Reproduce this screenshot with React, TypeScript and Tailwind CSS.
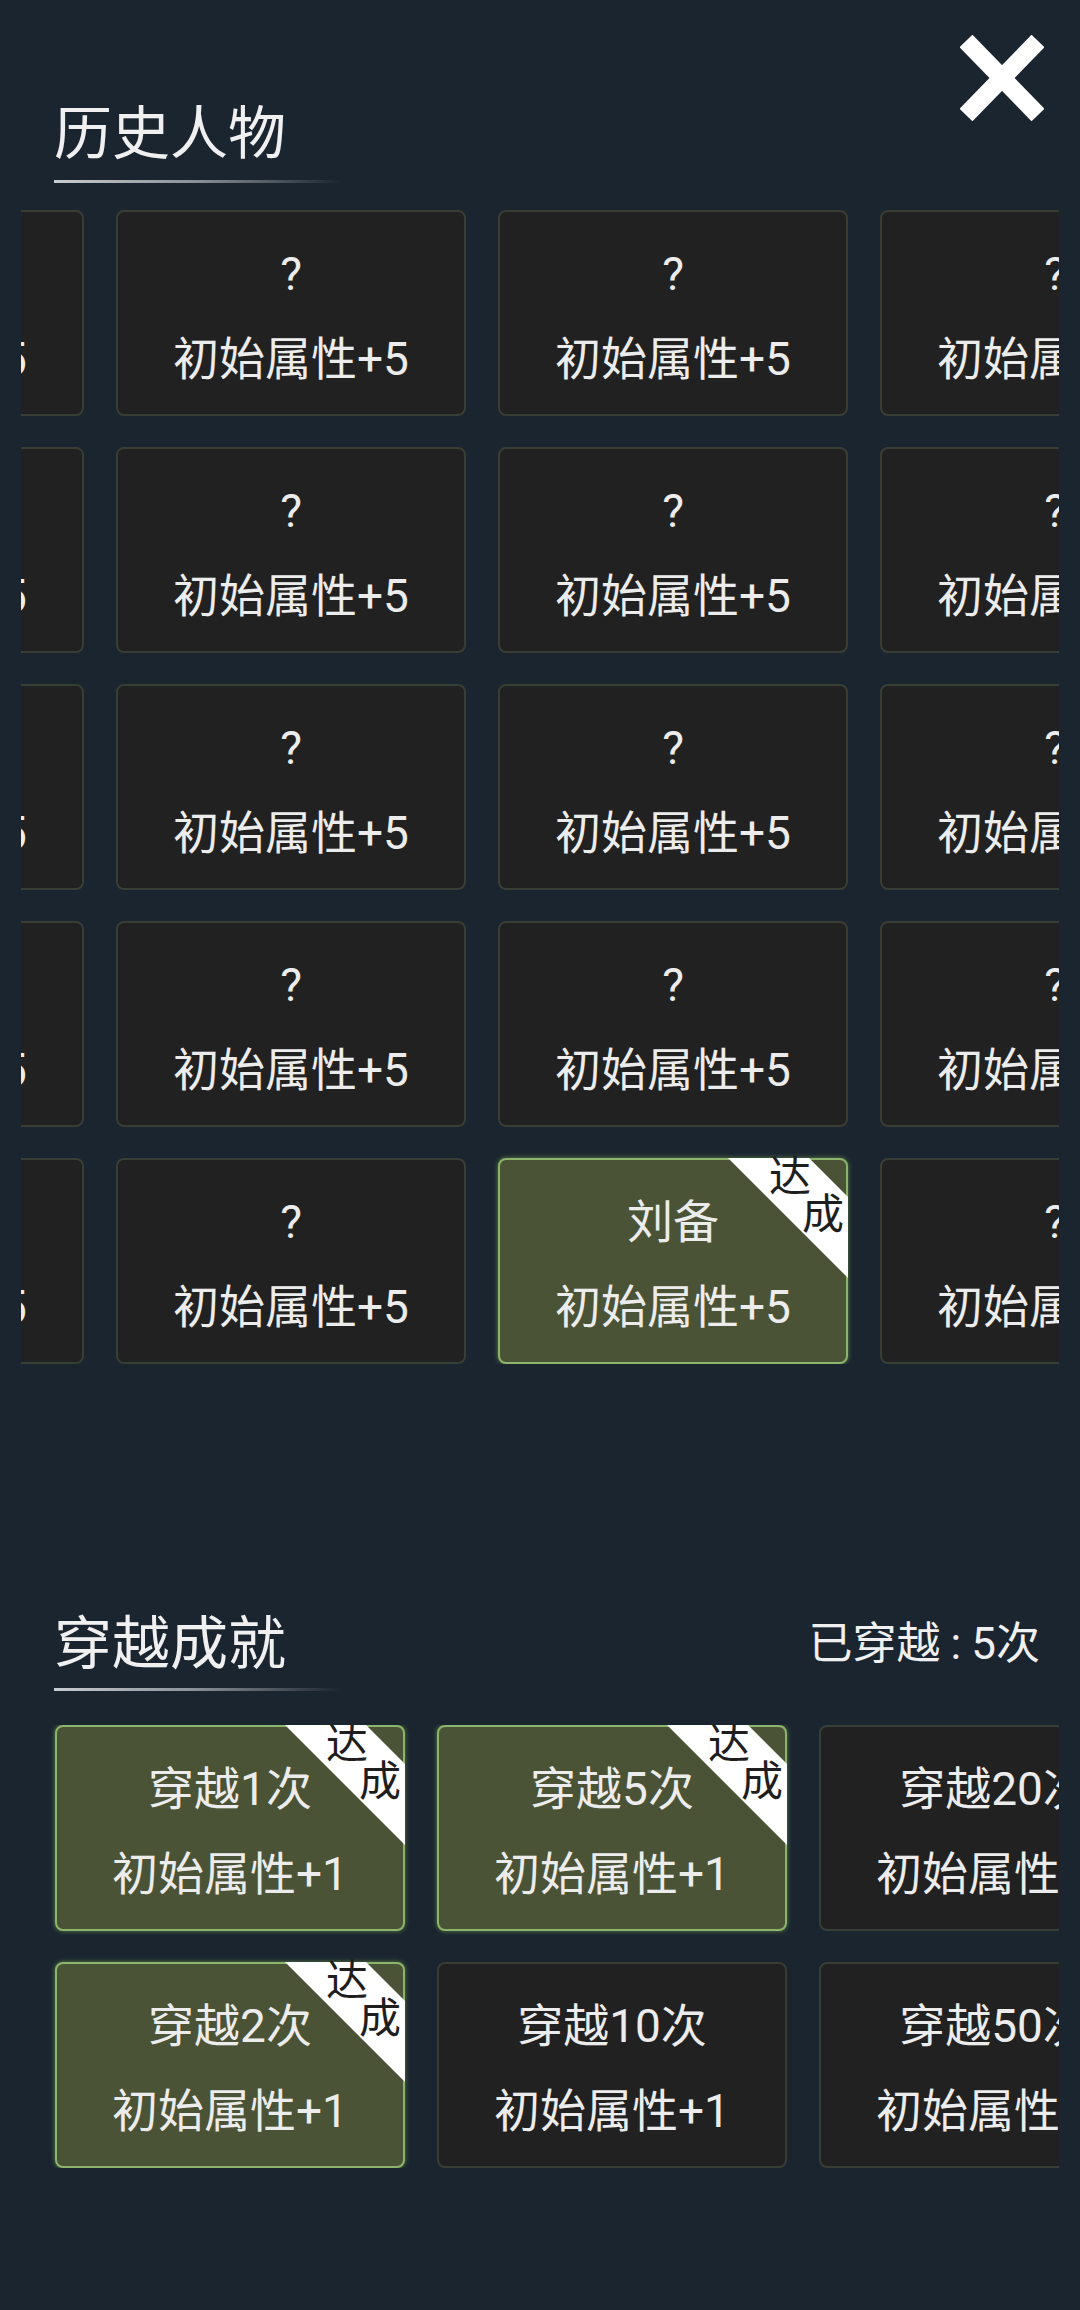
import React from "react";

type CardProps = { title: string; sub: string; done?: boolean };

function Card({ title, sub, done }: CardProps) {
  return (
    <div
      className={
        done
          ? "relative w-[350px] h-[206px] shrink-0 rounded-[8px] border-2 border-[#8cb46a] bg-[#4b5336] shadow-[0_0_5px_rgba(120,170,80,0.7)] flex flex-col items-center pt-[39px] gap-[39px] text-[46px] leading-[46px] text-[#ececec] whitespace-nowrap"
          : "relative w-[350px] h-[206px] shrink-0 rounded-[8px] border-2 border-[#393e34] bg-[#212121] flex flex-col items-center pt-[39px] gap-[39px] text-[46px] leading-[46px] text-[#ececec] whitespace-nowrap"
      }
    >
      <div>{title}</div>
      <div>{sub}</div>
      {done && (
        <div className="absolute -top-[2px] -right-[2px] w-[120px] h-[120px]">
          <div className="absolute inset-0 bg-white [clip-path:polygon(0_0,81px_0,120px_39px,120px_120px)]" />
          <div className="absolute left-[40px] top-[-3px] w-[44px] h-[44px] text-[42px] leading-[44px] text-[#1e1e1e] text-center">达</div>
          <div className="absolute left-[73px] top-[35px] w-[44px] h-[44px] text-[42px] leading-[44px] text-[#1e1e1e] text-center">成</div>
        </div>
      )}
    </div>
  );
}

function Heading({ text }: { text: string }) {
  return <div className="text-[58px] leading-[64px] text-[#f0f0f0]">{text}</div>;
}

function Underline() {
  return <div className="h-[3px] w-[287px] bg-gradient-to-r from-[#c9cdd1] via-[#8a9096] to-transparent" />;
}

export default function App() {
  const cols = [0, 1, 2, 3];
  const rows = [0, 1, 2, 3, 4];
  const ach = [
    { t: "穿越1次", d: true },
    { t: "穿越2次", d: true },
    { t: "穿越5次", d: true },
    { t: "穿越10次", d: false },
    { t: "穿越20次", d: false },
    { t: "穿越50次", d: false },
  ];
  return (
    <div className="relative w-[1080px] h-[2310px] bg-[#1b2530] overflow-hidden [font-family:Roboto,'Noto_Sans_CJK_SC',sans-serif]">
      <div className="absolute top-[35px] right-[36px]">
        <svg width="84" height="86" viewBox="0 0 84 86">
          <line x1="6" y1="6" x2="78" y2="80" stroke="#ffffff" strokeWidth="18" />
          <line x1="78" y1="6" x2="6" y2="80" stroke="#ffffff" strokeWidth="18" />
        </svg>
      </div>

      <div className="pt-[102px] pl-[54px]">
        <Heading text="历史人物" />
        <div className="mt-[14px]">
          <Underline />
        </div>
      </div>

      <div className="mt-[27px] ml-[21px] w-[1038px] overflow-hidden">
        <div className="flex gap-[32px] ml-[-287px]">
          {cols.map((c) => (
            <div key={c} className="flex flex-col gap-[31px] shrink-0">
              {rows.map((r) => {
                const done = c === 2 && r === 4;
                return <Card key={r} title={done ? "刘备" : "?"} sub="初始属性+5" done={done} />;
              })}
            </div>
          ))}
        </div>
      </div>

      <div className="mt-[248px] pl-[54px] pr-[40px] flex items-center justify-between">
        <Heading text="穿越成就" />
        <div className="text-[44px] leading-[50px] text-[#f0f0f0] flex items-center">
          <span>已穿越</span>
          <span className="mx-[10px]">:</span>
          <span>5次</span>
        </div>
      </div>
      <div className="mt-[12px] pl-[54px]">
        <Underline />
      </div>

      <div className="mt-[34px] ml-[21px] w-[1038px] overflow-hidden">
        <div className="grid grid-rows-2 grid-flow-col auto-cols-[350px] gap-x-[32px] gap-y-[31px] pl-[34px] w-max">
          {ach.map((a) => (
            <Card key={a.t} title={a.t} sub="初始属性+1" done={a.d} />
          ))}
        </div>
      </div>
    </div>
  );
}
